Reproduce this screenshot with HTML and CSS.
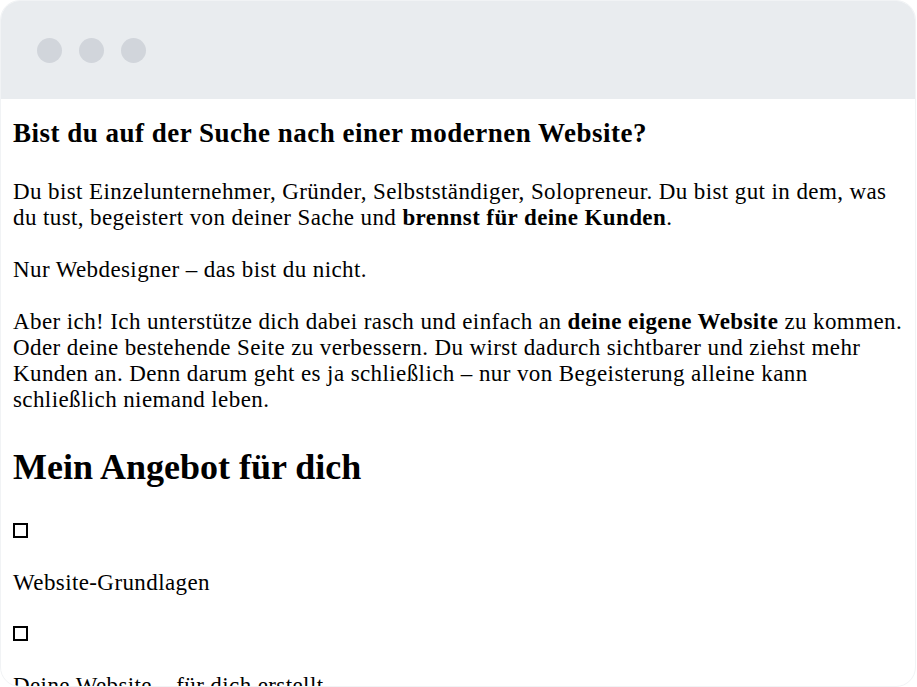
FILE: index.html
```html
<!DOCTYPE html>
<html lang="de">
<head>
  <meta charset="UTF-8" />
  <meta name="viewport" content="width=device-width, initial-scale=1.0" />
  <title>Website-Vorschau</title>
  <link rel="stylesheet" href="styles.css">
</head>
<body>
  <div class="browser-frame">
    <!-- Fensterleiste -->
    <div class="browser-bar">
      <span class="bar-dot"></span>
      <span class="bar-dot"></span>
      <span class="bar-dot"></span>
    </div>

    <div class="page-content">
      <h3>Bist du auf der Suche nach einer modernen Website?</h3>
      <p>Du bist Einzelunternehmer, Gründer, Selbstständiger, Solopreneur. Du bist gut in dem, was du tust, begeistert von deiner Sache und <strong>brennst für deine Kunden</strong>.</p>
      <p>Nur Webdesigner – das bist du nicht.</p>
      <p>Aber ich! Ich unterstütze dich dabei rasch und einfach an <strong>deine eigene Website</strong> zu kommen. Oder deine bestehende Seite zu verbessern. Du wirst dadurch sichtbarer und ziehst mehr Kunden an. Denn darum geht es ja schließlich – nur von Begeisterung alleine kann schließlich niemand leben.</p>

      <h2>Mein Angebot für dich</h2>

      <div class="offer-item">
        <p class="offer-icon"><span class="icon-box"></span></p>
        <p class="offer-title">Website-Grundlagen</p>
      </div>
      <div class="offer-item">
        <p class="offer-icon"><span class="icon-box"></span></p>
        <p class="offer-title">Deine Website – für dich erstellt</p>
      </div>
    </div>
  </div>
</body>
</html>
```
FILE: styles.css
```css
* { box-sizing: border-box; }
body { margin: 0; background: #fff; font-family: 'Liberation Serif', 'Times New Roman', serif; color: #000; }

.browser-frame {
  width: 916px;
  height: 687px;
  border: 1px solid #f1f3f5;
  border-radius: 20px;
  overflow: hidden;
  background: #fff;
}
.browser-bar {
  height: 98px;
  background-color: #e9ecef;
  display: flex;
  align-items: center;
  gap: 17px;
  padding-left: 36px;
}
.bar-dot {
  width: 25px;
  height: 25px;
  border-radius: 50%;
  background-color: #d1d5db;
}

.page-content { padding: 17.5px 4px 0 12px; font-size: 23px; line-height: 26px; letter-spacing: 0.4px; }
.page-content h3 { font-size: 27px; line-height: 32px; letter-spacing: 0.5px; margin: 0 0 30.5px; }
.page-content p { margin: 0 0 26px; }
.page-content h2 { font-size: 36px; line-height: 40px; letter-spacing: 0; margin: 34px 0 31px; }

.icon-box {
  display: inline-block;
  width: 15px;
  height: 15px;
  border: 2px solid #000;
}
.offer-title { margin-bottom: 25px !important; }
```
